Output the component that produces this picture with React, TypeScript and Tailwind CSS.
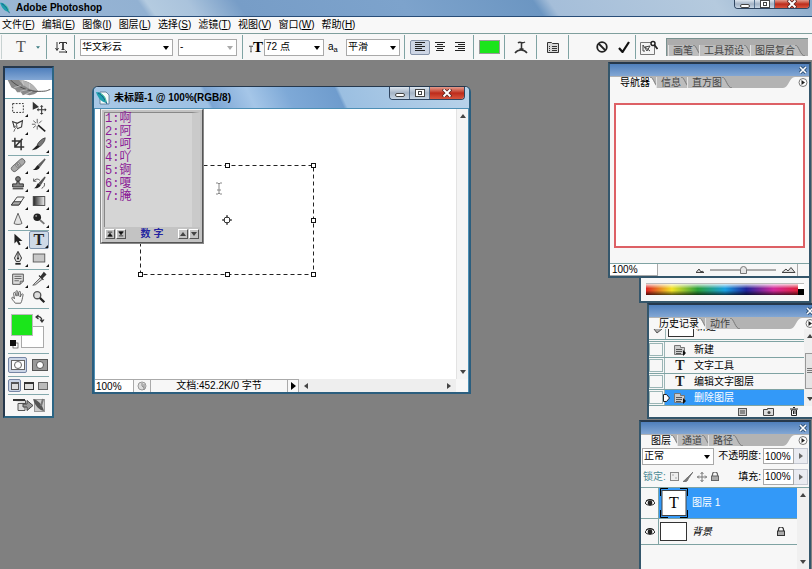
import { useState } from "react";
import type { ReactNode } from "react";
import clsx from "clsx";

const menus = [
    { label: "文件", hotkey: "F" },
    { label: "编辑", hotkey: "E" },
    { label: "图像", hotkey: "I" },
    { label: "图层", hotkey: "L" },
    { label: "选择", hotkey: "S" },
    { label: "滤镜", hotkey: "T" },
    { label: "视图", hotkey: "V" },
    { label: "窗口", hotkey: "W" },
    { label: "帮助", hotkey: "H" },
];

const candidates = ["啊", "阿", "呵", "吖", "锕", "嗄", "腌"];

const historySteps = [
    { label: "新建", icon: "doc" },
    { label: "文字工具", icon: "type" },
    { label: "编辑文字图层", icon: "type" },
    { label: "删除图层", icon: "doc" },
];

// All tool drawings use an 18x18 box
const toolIcons: Record<string, ReactNode> = {
    marquee: <rect x="3" y="4" width="12" height="10" fill="none" stroke="#222" strokeDasharray="2 1.5" />,
    move: (
        <>
            <path d="M2 2 L2 11 L9 8 Z" fill="#333" />
            <path d="M12 7v8M8 11h8" stroke="#333" strokeWidth="1.2" />
            <path d="M12 5.5l2 2h-4zM12 16.5l2-2h-4zM6.5 11l2-2v4zM17.5 11l-2-2v4z" fill="#333" />
        </>
    ),
    lasso: (
        <>
            <path d="M5 11 L3 4 L8 6 L14 3 L13 10 L8 12" fill="none" stroke="#333" strokeWidth="1.2" />
            <path d="M7 5l1 6M4 9.5c3-1 4 1 2 2.500s0 3-2 3" fill="none" stroke="#555" strokeWidth="1.1" />
        </>
    ),
    wand: (
        <>
            <path d="M8 8l8 7" stroke="#222" strokeWidth="1.8" />
            <path d="M7 1v5M7 9v4M1 7h4M9 6l3-3M2.500 3l3 2.500M2.500 11l3-2.500" stroke="#555" />
        </>
    ),
    crop: <path d="M5.500 2v10.500H16M2 5.500h10.500V16M5.500 12.500L14 3" fill="none" stroke="#333" strokeWidth="1.700" />,
    slice: (
        <>
            <path d="M16 2c-4 1-8 5-9 8l3 2c3-3 6-6 6-10z" fill="#777" stroke="#333" strokeWidth=".8" />
            <path d="M1 16l6-6 3 2-4 3z" fill="#222" />
        </>
    ),
    heal: (
        <g transform="rotate(-42 9 9)">
            <rect x="0" y="6" width="18" height="6.500" rx="3" fill="#a9a9a9" stroke="#666" />
            <rect x="6" y="6" width="6" height="6.500" fill="#888" />
            <path d="M7.500 8h1M10 8h1M7.500 10h1M10 10h1" stroke="#eee" />
        </g>
    ),
    brush: (
        <>
            <path d="M15.500 2L8 9l2 2 6-8z" fill="#666" stroke="#333" strokeWidth=".6" />
            <path d="M7.500 9l2.500 2.500C8 15 5 15 2 14.500 5 13.500 5 11 7.500 9z" fill="#222" />
        </>
    ),
    stamp: (
        <>
            <circle cx="9" cy="4.500" r="2.700" fill="#777" stroke="#333" />
            <path d="M8 7h2l.5 3H15v3.500H3V10h4.500z" fill="#888" stroke="#222" />
            <path d="M3 15.500h12" stroke="#222" strokeWidth="1.200" />
        </>
    ),
    historyBrush: (
        <>
            <path d="M15.500 2L9 9l2 2 5-8z" fill="#555" stroke="#333" strokeWidth=".6" />
            <path d="M8 9l3 2.500C9 15 6 15 3 15c3-1 3-4 5-6z" fill="#222" />
            <path d="M3 7c2-3 5-3 7-1M3 4v3h3M15 9c1 3-1 5-3 6" fill="none" stroke="#444" />
        </>
    ),
    eraser: (
        <>
            <path d="M1.500 13.500L8 4.500h8l-6 9z" fill="#f4f4f4" stroke="#333" />
            <path d="M1.500 13.500h8.500l2.500-3.700H4.300z" fill="#aaa" stroke="#333" />
        </>
    ),
    gradient: (
        <>
            <defs>
                <linearGradient id="toolGradient">
                    <stop offset="0" stopColor="#222" />
                    <stop offset="1" stopColor="#f2f2f2" />
                </linearGradient>
            </defs>
            <rect x="2.500" y="4" width="13" height="10" fill="url(#toolGradient)" stroke="#444" />
        </>
    ),
    blur: <path d="M9 2.500L4.500 14c1.500 1.500 7.500 1.500 9 0z" fill="#e2e2e2" stroke="#555" />,
    burn: (
        <>
            <circle cx="7" cy="7" r="4.300" fill="#222" />
            <path d="M10 10l5 4.500" stroke="#777" strokeWidth="2.200" />
            <circle cx="5.800" cy="5.500" r="1.100" fill="#999" />
        </>
    ),
    pathSelect: <path d="M5 2v11l2.500-2.500L10 15l2-1-2-4h4z" fill="#222" />,
    pen: (
        <>
            <path d="M9 1.500L5 9l2 4h4l2-4z" fill="#ddd" stroke="#222" />
            <path d="M9 3v6" stroke="#222" />
            <circle cx="9" cy="9.500" r="1.200" fill="#222" />
            <path d="M6 15.500h6" stroke="#222" strokeWidth="2" />
        </>
    ),
    shape: <rect x="2.500" y="4.500" width="13" height="9" fill="#c8c8c8" stroke="#555" />,
    notes: (
        <>
            <path d="M3 3.500h12v8l-3.500 3.500H3z" fill="#ddd" stroke="#444" />
            <path d="M5 6h8M5 8.500h8M5 11h5M11.500 15v-3.500H15" fill="none" stroke="#555" />
        </>
    ),
    eyedropper: (
        <>
            <path d="M11 7L3 15l-1 1 3-.5L13 9z" fill="#ccc" stroke="#555" />
            <path d="M9 5l5 5M11.500 6l3-4 2 2-3.500 3.500z" fill="#333" stroke="#333" strokeWidth="1.400" />
        </>
    ),
    hand: (
        <path
            d="M6 16c-2-3-4-4-4-6 0-1 2-1 3 1L4 5c0-1.500 1.700-1.500 2 0l1 3-.3-5c0-1.500 2-1.500 2 0L9 8l1-4.500c.3-1.300 2-1 1.800.3L11.300 9l1.700-3c.7-1.200 2-.5 1.700.7C14 10 13.500 14 12 16z"
            fill="#f7f7f7"
            stroke="#555"
        />
    ),
    zoom: (
        <>
            <circle cx="7" cy="7" r="4" fill="#ddd" stroke="#555" strokeWidth="1.500" />
            <path d="M10 10l5 5" stroke="#222" strokeWidth="2.500" />
        </>
    ),
};

const toolGroups: { name: string; label: string; flyout?: boolean }[][] = [
    [
        { name: "marquee", label: "Marquee", flyout: true },
        { name: "move", label: "Move" },
        { name: "lasso", label: "Lasso", flyout: true },
        { name: "wand", label: "Magic Wand" },
        { name: "crop", label: "Crop" },
        { name: "slice", label: "Slice", flyout: true },
    ],
    [
        { name: "heal", label: "Healing Brush", flyout: true },
        { name: "brush", label: "Brush", flyout: true },
        { name: "stamp", label: "Clone Stamp", flyout: true },
        { name: "historyBrush", label: "History Brush", flyout: true },
        { name: "eraser", label: "Eraser", flyout: true },
        { name: "gradient", label: "Gradient", flyout: true },
        { name: "blur", label: "Blur", flyout: true },
        { name: "burn", label: "Burn", flyout: true },
    ],
    [
        { name: "pathSelect", label: "Path Selection", flyout: true },
        { name: "type", label: "Type", flyout: true },
        { name: "pen", label: "Pen", flyout: true },
        { name: "shape", label: "Shape", flyout: true },
    ],
    [
        { name: "notes", label: "Notes", flyout: true },
        { name: "eyedropper", label: "Eyedropper", flyout: true },
        { name: "hand", label: "Hand" },
        { name: "zoom", label: "Zoom" },
    ],
];

const FeatherLogo = ({ className, page }: { className?: string; page?: boolean }) => (
    <svg viewBox="0 0 14 14" className={className}>
        {page && <path d="M4 1h6l3 3v9H4z" fill="#f4fafc" stroke="#52728c" strokeWidth=".8" />}
        <path d="M0 1c5 0 9 3 11 11C5 11 2 7 0 1z" fill="#1e9fae" />
        <path d="M2 2c4 2 6 5 9 11" fill="none" stroke="#135a8d" />
        <path d="M5 3c3 1 5 4 5 8" fill="none" stroke="#5cc79a" />
    </svg>
);

const WindowButtons = ({ className, height }: { className?: string; height: string }) => (
    <div className={clsx("flex overflow-hidden rounded-b border border-t-0 border-[#2f4560]", height, className)}>
        <button aria-label="Minimize" className="flex w-5 items-center justify-center border-r border-[#54708f] bg-gradient-to-b from-[#dde6ef] via-[#a5b4c6] to-[#c8d6e5]">
            <span className="mt-1 h-1 w-2.5 rounded-xs border border-[#444] bg-white"></span>
        </button>
        <button aria-label="Maximize" className="flex w-5 items-center justify-center border-r border-[#54708f] bg-gradient-to-b from-[#dde6ef] via-[#a5b4c6] to-[#c8d6e5]">
            <span className="flex h-2 w-2.5 items-center justify-center border border-[#444] bg-white">
                <span className="h-1 w-1 border border-[#444]"></span>
            </span>
        </button>
        <button aria-label="Close" className="flex w-[34px] items-center justify-center bg-gradient-to-b from-[#e29a8c] via-[#bd2a1a] to-[#d8553e]">
            <svg viewBox="0 0 10 8" className="h-2 w-2.5">
                <path d="M1 0l8 8M9 0L1 8" stroke="#5b2320" strokeWidth="3.500" />
                <path d="M1.500.5l7 7M8.500.5l-7 7" stroke="#fff" strokeWidth="2" />
            </svg>
        </button>
    </div>
);

const Select = ({ label, options, className, muted }: { label: string; options: string[]; className?: string; muted?: boolean }) => (
    <div className={clsx("relative", className)}>
        <select aria-label={label} className="block h-[17px] w-full appearance-none border border-[#a9a9a9] bg-white pl-px leading-none outline-none">
            {options.map((option) => (
                <option key={option}>{option}</option>
            ))}
        </select>
        <svg viewBox="0 0 6 4" className={clsx("pointer-events-none absolute top-[7px] right-1 h-1 w-1.5", muted ? "text-[#aaa]" : "text-black")}>
            <path d="M0 0h6L3 4z" fill="currentColor" />
        </svg>
    </div>
);

const Divider = () => <div className="h-6 w-px shrink-0 bg-[#7fa3a3]"></div>;

const AlignIcon = ({ d }: { d: string }) => (
    <svg viewBox="0 0 12 12" className="h-3 w-3">
        <path d={d} stroke="#222" />
    </svg>
);

const OptionsBar = () => (
    <div className="flex h-[27px] items-center border-t border-[#7f9f9d] bg-[#f7f7f7] pr-1">
        <div className="ml-px h-6 w-px bg-[#c8d2d2]"></div>
        <button aria-label="Type tool preset" className="flex w-11 items-center justify-center gap-2.5 pl-2">
            <span className="font-['Liberation_Serif',serif] text-[16px] text-[#555]">T</span>
            <svg viewBox="0 0 6 4" className="h-[3px] w-1"><path d="M0 0h6L3 4z" fill="#3c7c83" /></svg>
        </button>
        <Divider />
        <button aria-label="Toggle text orientation" className="flex w-[27px] justify-center">
            <svg viewBox="0 0 12 12" className="h-3 w-3">
                <path d="M2 1v8M.5 7L2 9.500 3.500 7M4.500 3V1.500h7V3M6.500 8.500h3M4 11h8M10.500 9.500L12 11l-1.500 1" fill="none" stroke="#333" />
                <path d="M8 1.500v7" stroke="#333" strokeWidth="1.700" />
            </svg>
        </button>
        <Divider />
        <Select label="Font" options={["华文彩云"]} className="ml-[5px] w-[93px]" />
        <Select label="Font style" options={["-"]} className="ml-[5px] w-[59px]" muted />
        <div className="ml-[5px]"><Divider /></div>
        <span className="ml-1.5 flex w-3.5 items-end justify-end">
            <svg viewBox="0 0 5 8" className="mb-[3px] h-2 w-[5px]"><path d="M0 1.500V.5h5v1M2.500.5v7M1.500 7.500h2" fill="none" stroke="#333" /></svg>
            <span className="font-['Liberation_Serif',serif] text-[15px] leading-[17px] font-bold">T</span>
        </span>
        <Select label="Font size" options={["72 点"]} className="ml-px w-[60px]" />
        <span className="mx-1 flex w-3.5 items-baseline text-[10px] leading-none">a<sub>a</sub></span>
        <Select label="Anti-aliasing" options={["平滑"]} className="w-[54px]" />
        <div className="ml-1"><Divider /></div>
        <button aria-label="Align left" className="ml-[5px] flex h-[15px] w-5 items-center justify-center rounded-xs border border-[#8592a8] bg-[#cdd5e4]">
            <AlignIcon d="M1 1.500h10M1 3.500h7M1 5.500h10M1 7.500h7M1 9.500h10" />
        </button>
        <button aria-label="Align center" className="flex w-5 justify-center">
            <AlignIcon d="M1 1.500h10M3 3.500h6M1 5.500h10M3 7.500h6M2 9.500h8" />
        </button>
        <button aria-label="Align right" className="flex w-5 justify-center">
            <AlignIcon d="M1 1.500h10M4 3.500h7M1 5.500h10M4 7.500h7M1 9.500h10" />
        </button>
        <div className="ml-[3px]"><Divider /></div>
        <button aria-label="Text color" className="ml-[5px] h-3.5 w-[21px] border border-[#9a9a9a] bg-[#1be51b]"></button>
        <div className="ml-1"><Divider /></div>
        <button aria-label="Warp text" className="flex w-[31px] justify-center">
            <svg viewBox="0 0 14 14" className="h-3.5 w-3.5">
                <path d="M4 3c2-2 4 1 7-1M7.500 2v7M5.500 9h4M1 13c3-4 9-4 12 0" fill="none" stroke="#333" strokeWidth="1.500" />
            </svg>
        </button>
        <Divider />
        <button aria-label="Palettes" className="flex w-[31px] justify-center">
            <svg viewBox="0 0 12 12" className="h-3 w-3">
                <path d="M.5 1.500h4l1 1h6v9H.5z" fill="#d8d8d8" stroke="#333" />
                <path d="M2 5.500h1M5 5.500h5M2 7.500h1M5 7.500h5M2 9.500h1M5 9.500h5" stroke="#333" />
            </svg>
        </button>
        <Divider />
        <button aria-label="Cancel" className="ml-auto flex w-[22px] justify-center">
            <svg viewBox="0 0 12 12" className="h-3 w-3">
                <circle cx="6" cy="6" r="4.800" fill="none" stroke="#222" strokeWidth="1.800" />
                <path d="M2.500 2.500l7 7" stroke="#222" strokeWidth="1.800" />
            </svg>
        </button>
        <button aria-label="Commit" className="flex w-[22px] justify-center">
            <svg viewBox="0 0 12 12" className="h-3 w-3">
                <path d="M1 7l3.500 4L11 1" fill="none" stroke="#111" strokeWidth="2.200" />
            </svg>
        </button>
        <Divider />
        <button aria-label="Go to Bridge" className="flex w-[30px] pl-1">
            <svg viewBox="0 0 18 15" className="h-[15px] w-[18px]">
                <path d="M.5 2.500h11l3 3v9H.5z" fill="#f4f4f4" stroke="#777" />
                <path d="M3 5l4 6 3-5-5 1 5 4M3 5v6h2" fill="none" stroke="#444" />
                <circle cx="13" cy="3.500" r="2" fill="#fff" stroke="#222" strokeWidth="1.500" />
                <path d="M14.500 5l3 4" stroke="#222" strokeWidth="1.800" />
            </svg>
        </button>
        <div className="flex h-[18px] w-[142px] items-end border-t border-l border-[#78918f] bg-[#adadad] pl-px">
            {["画笔", "工具预设", "图层复合"].map((tab) => (
                <PanelTab key={tab} label={tab} />
            ))}
        </div>
    </div>
);

const PanelTab = ({ label, active }: { label: string; active?: boolean }) => (
    <button className={clsx("flex h-[11px] items-center text-[10px] leading-none whitespace-nowrap", active ? "text-black" : "text-[#444]")}>
        <span className={clsx("h-full pl-1 leading-[11px]", active ? "bg-[#f7f7f7]" : "border-l border-[#e2e2e2] bg-[#bdbdbd]")}>{label}</span>
        <svg viewBox="0 0 10 11" preserveAspectRatio="none" className={clsx("-mr-1 h-full w-2.5", active ? "text-[#f7f7f7]" : "text-[#bdbdbd]")}>
            <path d="M0 0c4 0 5 11 10 11H0z" fill="currentColor" />
            <path d="M0 0c4 0 5 11 10 11" fill="none" stroke="#777" />
        </svg>
    </button>
);

const PanelShell = ({ tabs, className, children }: { tabs: string[]; className?: string; children: ReactNode }) => (
    <section className={clsx("absolute flex flex-col border-2 border-[#34566b] border-t-[#26384c] bg-[#f7f7f7]", className)}>
        <div className="flex h-3 shrink-0 items-center justify-end bg-gradient-to-b from-[#4f7fbc] to-[#83a7d4] pr-0.5">
            <button aria-label="Close panel">
                <svg viewBox="0 0 8 8" className="h-2 w-2">
                    <path d="M1 1l6 6M7 1L1 7" stroke="#36597f" strokeWidth="3.500" />
                    <path d="M1 1l6 6M7 1L1 7" stroke="#fff" strokeWidth="1.500" />
                </svg>
            </button>
        </div>
        <div className="flex h-3 shrink-0 items-end bg-[#b3b3b3]">
            <div className="h-[11px] w-1.5 bg-[#f7f7f7]"></div>
            {tabs.map((tab, index) => (
                <PanelTab key={tab} label={tab} active={index === 0} />
            ))}
            <button aria-label="Panel menu" className="ml-auto flex h-[11px]">
                <svg viewBox="0 0 26 11" className="h-full w-[26px]">
                    <path d="M0 11C6 11 6 0 12 0h14v11z" fill="#f7f7f7" />
                    <circle cx="20" cy="5.500" r="4" fill="#fff" stroke="#777" />
                    <path d="M18.500 3l3.500 2.500L18.500 8z" fill="#222" />
                </svg>
            </button>
        </div>
        {children}
    </section>
);

const Toolbox = () => {
    const [activeTool, setActiveTool] = useState("type");

    return (
        <aside className="absolute top-1.5 left-[3px] flex w-[51px] flex-col border-2 border-[#2c6584] border-t-[#26384c] border-l-[#26384c] bg-[#f7f7f7]">
            <div className="h-3 bg-gradient-to-b from-[#4f7fbc] to-[#83a7d4]"></div>
            <svg viewBox="0 0 46 19" className="h-[19px] w-full border-b border-[#66a3ad] bg-white">
                <path d="M1 0h14c8 1 14 5 18 12-2 3-6 4-9 4l-4-1-3 1-2-3-4 0-2-3-4-2z" fill="#8a8a8a" />
                <path d="M13 0c9 1 16 5 20 12-8-1-15-5-20-12z" fill="#b5b5b5" />
                <path d="M4 0c7 7 18 12 29 12s9-1 13-2" fill="none" stroke="#4a4a4a" />
                <path d="M8 8l7-2M14 12l8-2M20 15l7-3M16 0l2 6M24 4l0 5" stroke="#d5d5d5" strokeWidth=".7" />
            </svg>
            <div className="flex flex-col px-[3px]">
                {toolGroups.map((group, index) => (
                    <div key={index} className="grid grid-cols-2 justify-items-center border-b border-[#84a9ad] pb-0.5">
                        {group.map((tool) => (
                            <button
                                key={tool.name}
                                aria-label={tool.label}
                                onClick={() => setActiveTool(tool.name)}
                                className={clsx(
                                    "relative flex h-[18px] w-5 items-center justify-center",
                                    activeTool === tool.name && "rounded-xs border border-[#7e93ac] bg-[#cfdae7]"
                                )}
                            >
                                {tool.name === "type" ? (
                                    <span className="font-['Liberation_Serif',serif] text-[16px] font-bold leading-none text-[#222]">T</span>
                                ) : (
                                    <svg viewBox="0 0 18 18" className="h-4 w-4">{toolIcons[tool.name]}</svg>
                                )}
                                {tool.flyout && (
                                    <svg viewBox="0 0 3 3" className="absolute right-0 bottom-0 h-[3px] w-[3px]"><path d="M3 0v3H0z" fill="#111" /></svg>
                                )}
                            </button>
                        ))}
                    </div>
                ))}
                <div className="border-b border-[#84a9ad] pt-1 pb-[3px] pl-0.5">
                    <svg viewBox="0 0 36 37" className="h-[37px] w-9">
                        <rect x="11.500" y="13.500" width="22" height="21" fill="#fff" stroke="#aaa" />
                        <rect x="1.500" y="1.500" width="21" height="21" fill="#1be51b" stroke="#bbb" />
                        <path d="M27 4c3-1 5 1 5 4M28.500 2L26 4l2.500 2M30 6.500l2 2.500 2-2.500" fill="none" stroke="#333" strokeWidth="1.200" />
                        <rect x="3" y="30" width="5" height="5" fill="#fff" stroke="#333" strokeWidth=".6" />
                        <rect x="0" y="27" width="6" height="6" fill="#111" />
                    </svg>
                </div>
                <div className="flex justify-between border-b border-[#84a9ad] py-[3px]">
                    <button aria-label="Standard mode" className="flex h-4 w-[19px] items-center justify-center rounded-xs border border-[#7686a5] bg-[#cbd5e6]">
                        <span className="flex h-2.5 w-3.5 items-center justify-center border border-[#666] bg-white"><span className="size-2 rounded-full border border-[#666]"></span></span>
                    </button>
                    <button aria-label="Quick mask mode" className="flex h-4 w-[19px] items-center justify-center">
                        <span className="flex h-3 w-4 items-center justify-center border border-[#555] bg-[#999]"><span className="size-2 rounded-full border border-[#555] bg-white"></span></span>
                    </button>
                </div>
                <div className="flex justify-between border-b border-[#84a9ad] py-0.5">
                    <button aria-label="Standard screen" className="flex h-[13px] w-[13px] items-center justify-center rounded-xs border border-[#7686a5] bg-[#cbd5e6]"><span className="h-2 w-2 border border-t-2 border-[#555] bg-[#ddd]"></span></button>
                    <button aria-label="Full screen with menu" className="flex h-[13px] w-[13px] items-center justify-center"><span className="h-2 w-2.5 border border-t-2 border-[#333] bg-[#ddd]"></span></button>
                    <button aria-label="Full screen" className="flex h-[13px] w-[13px] items-center justify-center"><span className="h-2 w-2.5 border border-[#666] bg-[#bbb]"></span></button>
                </div>
                <button aria-label="Edit in ImageReady" className="flex justify-center py-0.5 pb-[3px]">
                    <svg viewBox="0 0 36 16" className="h-4 w-9">
                        <path d="M2.500 3.500h12v4M7 6.500h7v7H7z" fill="#ddd" stroke="#555" />
                        <path d="M2 3h12" stroke="#333" strokeWidth="2" />
                        <path d="M12 7h4V3.500l6 5-6 5V10h-4z" fill="#999" stroke="#444" />
                        <rect x="23.500" y="2.500" width="10" height="12" fill="#ccc" stroke="#999" />
                        <path d="M22 2c5 1 9 5 11 12-5-1-9-5-11-12z" fill="#555" />
                        <path d="M32 2l-2 7" stroke="#777" strokeWidth="2" />
                    </svg>
                </button>
            </div>
        </aside>
    );
};

const ScrollArrow = ({ direction }: { direction: "up" | "down" | "left" | "right" }) => {
    const paths = { up: "M0 5L3 1l3 4z", down: "M0 1h6L3 5z", left: "M5 0v6L1 3z", right: "M1 0v6l4-3z" };
    return (
        <svg viewBox="0 0 6 6" className="h-1.5 w-1.5 shrink-0"><path d={paths[direction]} fill="#444" /></svg>
    );
};

const InputMethodWindow = () => (
    <div className="absolute top-0 left-1.5 flex w-[102px] flex-col border border-[#eee] border-r-[#555] border-b-[#555] bg-[#c3c3c3] p-0.5 outline outline-[#888]">
        <ol className="h-[115px] border-t border-l border-[#888] border-r-8 border-r-[#cacaca] bg-[#d5d5d5]">
            {candidates.map((word, index) => (
                <li key={word} className="h-[13px] font-['Liberation_Mono','Noto_Sans_CJK_SC',monospace] text-[12px] leading-[13px] text-[#8b1b95]">
                    {index + 1}:{word}
                </li>
            ))}
        </ol>
        <div className="flex h-[13px] items-center gap-px px-px">
            {["M1 1.500h6M1 7L4 3l3 4z", "M1 1h6L4 5zM1 6.500h6"].map((d) => (
                <button key={d} aria-label="Page" className="flex h-2.5 w-2.5 items-center justify-center border border-white border-r-[#555] border-b-[#555]">
                    <svg viewBox="0 0 8 8" className="h-1.5 w-1.5"><path d={d} fill="#111" stroke="#111" /></svg>
                </button>
            ))}
            <span className="flex-1 text-center text-[10px] leading-none font-bold text-[#2525a0]">数 字</span>
            {["up", "down"].map((direction) => (
                <button key={direction} aria-label={direction} className="flex h-2.5 w-2.5 items-center justify-center border border-white border-r-[#555] border-b-[#555]">
                    <ScrollArrow direction={direction as "up" | "down"} />
                </button>
            ))}
        </div>
    </div>
);

const handles = [[45, 56], [132, 56], [218, 56], [45, 165], [132, 165], [218, 165], [218, 111], [45, 111]];

const DocumentWindow = () => (
    <section className="absolute top-[26px] left-[92px] flex w-[379px] flex-col rounded-t-md border-2 border-t border-[#2b5e7e] border-t-[#26384c] bg-[#f7f7f7]">
        <header className="relative flex h-[21px] items-center gap-1 rounded-t bg-[linear-gradient(65deg,#a8c8e6_0%,#9dc0e3_30%,#7ba5d4_31%,#a5c6e8_42%,#7ea9d7_52%,#6f9ccd_65%,#9bbfe1_66%,#b9d3ea_100%)] pl-0.5">
            <FeatherLogo className="h-3.5 w-3.5" page />
            <h2 className="text-[10px] font-bold text-black">未标题-1 @ 100%(RGB/8)</h2>
            <WindowButtons className="absolute top-0 right-1" height="h-[13px]" />
        </header>
        <div className="flex h-[271px] border-x border-t border-[#4d8fb5]">
            <div className="relative flex-1 overflow-hidden bg-white">
                <svg viewBox="0 0 361 270" className="h-[270px] w-[361px]">
                    <rect x="45.500" y="56.500" width="173" height="109" fill="none" stroke="#222" strokeDasharray="4 3" />
                    {handles.map(([x, y]) => (
                        <rect key={`${x}-${y}`} x={x - 2 + 0.5} y={y - 2 + 0.5} width="4" height="4" fill="#fff" stroke="#111" />
                    ))}
                    <circle cx="132" cy="111" r="3" fill="#fff" stroke="#333" />
                    <path d="M132 106v3M132 113v3M127 111h3M134 111h3" stroke="#111" />
                    <path d="M121 74h2l1 1 1-1h2M124 75v9M122 81h4M121 85h2l1-1 1 1h2" fill="none" stroke="#888" />
                </svg>
                <InputMethodWindow />
            </div>
            <div className="flex w-3 flex-col items-center justify-between border-l border-[#e3e3e3] bg-[#f4f4f4] py-1">
                <ScrollArrow direction="up" />
                <ScrollArrow direction="down" />
            </div>
        </div>
        <footer className="flex h-[13px] items-center border-x border-[#4d8fb5] text-[10px] leading-none text-black">
            <input aria-label="Zoom level" defaultValue="100%" className="h-full w-[38px] border-t border-[#aaa] bg-white pl-px" />
            <div className="flex h-full w-[18px] items-center justify-center border-x border-t border-[#aaa]">
                <svg viewBox="0 0 10 10" className="h-2.5 w-2.5">
                    <circle cx="5" cy="5" r="4" fill="#ddd" stroke="#999" />
                    <path d="M5 2v3l2 1.500M7 3v6" fill="none" stroke="#888" />
                </svg>
            </div>
            <div className="flex h-full w-[136px] items-center justify-center border-t border-[#aaa]">文档:452.2K/0 字节</div>
            <button aria-label="Status options" className="flex h-full w-3 items-center justify-center border border-b-0 border-[#aaa]">
                <svg viewBox="0 0 5 8" className="h-2 w-[5px]"><path d="M0 0v8l5-4z" fill="#000" /></svg>
            </button>
            <div className="flex h-full flex-1 items-center justify-between bg-[#eee] px-1">
                <ScrollArrow direction="left" />
                <ScrollArrow direction="right" />
            </div>
            <div className="h-full w-3"></div>
        </footer>
    </section>
);

const NavigatorPanel = () => (
    <PanelShell tabs={["导航器", "信息", "直方图"]} className="top-0.5 right-px w-[203px]">
        <div className="px-1 pt-[15px] pb-[15px]">
            <div className="h-[145px] border-2 border-[#dd6065] bg-white"></div>
        </div>
        <div className="flex h-[13px] items-center border-t border-[#7fa3a3] text-[10px]">
            <input aria-label="Navigator zoom" defaultValue="100%" className="h-3 w-12 border-r border-b border-[#aaa] bg-white pl-0.5 leading-none" />
            <svg viewBox="0 0 8 5" className="ml-[38px] h-[5px] w-2"><path d="M0 4.500L3 1l2 3 1-1 2 1.500z" fill="#ddd" stroke="#444" /></svg>
            <input
                type="range"
                aria-label="Zoom slider"
                defaultValue={50}
                className="mx-1.5 h-2 w-[66px] appearance-none bg-transparent [&::-webkit-slider-runnable-track]:h-0.5 [&::-webkit-slider-runnable-track]:bg-[#aaa] [&::-webkit-slider-thumb]:-mt-[3px] [&::-webkit-slider-thumb]:h-2 [&::-webkit-slider-thumb]:w-[7px] [&::-webkit-slider-thumb]:appearance-none [&::-webkit-slider-thumb]:rounded-t [&::-webkit-slider-thumb]:border [&::-webkit-slider-thumb]:border-[#777] [&::-webkit-slider-thumb]:bg-[#e5e5e5]"
            />
            <svg viewBox="0 0 14 6" className="h-1.5 w-3.5"><path d="M0 5.500L4 2l2 2 3-3.500 4 5z" fill="#ddd" stroke="#444" /></svg>
            <div className="ml-auto h-full w-3 border-l border-[#aaa]"></div>
        </div>
    </PanelShell>
);

const ColorPanel = () => (
    <section className="absolute top-[216px] right-px w-[172px] border-2 border-t-0 border-[#34566b] bg-[#f7f7f7] px-[5px] pt-[7px] pb-1.5">
        <div className="flex h-3 border-t border-[#bbb]">
            <div className="flex-1 bg-[linear-gradient(to_bottom,rgba(255,255,255,.8),transparent_40%,transparent_60%,rgba(0,0,0,.65)),linear-gradient(to_right,#d22_0%,#f3e326_17%,#2c9f3a_34%,#1a9fe0_52%,#20249a_66%,#d32a9a_84%,#e0213a_100%)]"></div>
            <div className="w-1.5 bg-gradient-to-b from-white from-50% to-black to-50%"></div>
        </div>
    </section>
);

const HistoryIcon = ({ name }: { name: string }) =>
    name === "type" ? (
        <span className="w-3 text-center font-['Liberation_Serif',serif] text-[14px] font-bold leading-none text-[#222]">T</span>
    ) : (
        <svg viewBox="0 0 12 12" className="h-3 w-3">
            <path d="M.5 1.500h6v2h4v7H.5z" fill="#ccc" stroke="#777" />
            <path d="M2 5.500h6M2 7.500h6M2 9.500h5" stroke="#555" />
            <path d="M9 6v6l3-3z" fill="#111" />
        </svg>
    );

const HistoryPanel = () => {
    const [current, setCurrent] = useState(3);

    return (
        <PanelShell tabs={["历史记录", "动作"]} className="top-[243px] -right-1.5 w-[171px]">
            <div className="flex">
                <div className="flex-1">
                    <div className="flex h-[11px] overflow-hidden border-b border-[#7fa3a3]">
                        <div className="w-[17px] border-r border-[#9ab5b5] pl-1"><svg viewBox="0 0 10 5" className="h-[5px] w-2.5"><path d="M1 0l3 4 5-4" fill="#aaa" stroke="#555" /></svg></div>
                        <div className="ml-0.5 h-2 w-[26px] border border-t-0 border-[#333] bg-white"></div>
                        <span className="-mt-2 ml-0.5 text-[10px] leading-[12px]">新建</span>
                    </div>
                    <ul className="mt-px border-t border-[#7fa3a3]">
                        {historySteps.map((step, index) => (
                            <li key={index} className="flex h-4 border-b border-[#7fa3a3]">
                                <span className="my-px w-3.5 border border-[#9ab5b5] bg-[#f7f7f7]"></span>
                                <button
                                    onClick={() => setCurrent(index)}
                                    className={clsx(
                                        "relative ml-px flex flex-1 items-center gap-2 border-l border-[#9ab5b5] pl-[9px] text-[10px] leading-none",
                                        current === index ? "bg-[#3399f8] text-white" : "text-black"
                                    )}
                                >
                                    {current === index && (
                                        <svg viewBox="0 0 7 8" className="absolute top-1 -left-0.5 h-2 w-[7px]"><path d="M.5.5h3l3 3.500-3 3.500h-3z" fill="#fff" stroke="#222" /></svg>
                                    )}
                                    <HistoryIcon name={step.icon} />
                                    <span>{step.label}</span>
                                </button>
                            </li>
                        ))}
                    </ul>
                </div>
                <div className="flex w-3 flex-col items-center justify-between bg-[#f0f0f0] py-1">
                    <ScrollArrow direction="up" />
                    <div className="mt-1.5 flex h-9 w-2.5 flex-col items-center justify-center gap-px border border-[#999] bg-[#e4e4e4]">
                        <span className="h-px w-1.5 bg-[#777]"></span>
                        <span className="h-px w-1.5 bg-[#777]"></span>
                        <span className="h-px w-1.5 bg-[#777]"></span>
                    </div>
                    <ScrollArrow direction="down" />
                </div>
            </div>
            <div className="flex h-[11px] items-center justify-end gap-4 pr-[18px]">
                <button aria-label="New document from state"><svg viewBox="0 0 9 8" className="h-2 w-[9px]"><rect x=".5" y=".5" width="8" height="7" fill="#ccc" stroke="#555" /><path d="M2 3h5M2 5h5" stroke="#444" /></svg></button>
                <button aria-label="New snapshot"><svg viewBox="0 0 11 8" className="h-2 w-[11px]"><path d="M.5 1.500h4v-1h6v7H.5z" fill="#ddd" stroke="#444" /><circle cx="6" cy="4.500" r="1.500" fill="#444" /></svg></button>
                <button aria-label="Delete state"><svg viewBox="0 0 8 9" className="h-[9px] w-2"><path d="M1.500 3h5v5.500h-5zM0 2h8M3 .5h2M3.500 4v3M5 4v3" fill="none" stroke="#222" /></svg></button>
            </div>
        </PanelShell>
    );
};

const EyeIcon = () => (
    <svg viewBox="0 0 10 8" className="h-2 w-2.5">
        <path d="M0 4c2-4 8-4 10 0-2 3-8 3-10 0z" fill="#fff" stroke="#222" />
        <circle cx="5" cy="4" r="2.400" fill="#222" />
        <path d="M1 2c2-2 6-2 8 0" fill="none" stroke="#222" />
    </svg>
);

const LockIcon = ({ color }: { color: string }) => (
    <svg viewBox="0 0 8 9" className="h-[9px] w-2">
        <path d="M1.500 4V2.500a2.500 2.500 0 015 0V4" fill="none" stroke={color} strokeWidth="1.200" />
        <rect x=".5" y="4" width="7" height="4.500" fill="#aaa" stroke={color} />
    </svg>
);

const PercentField = ({ label }: { label: string }) => (
    <label className="ml-auto flex items-center">
        <span className="pr-0.5">{label}:</span>
        <input defaultValue="100%" className="h-4 w-[31px] border border-[#a9a9a9] bg-white pl-px" />
        <span className="flex h-4 w-3.5 items-center justify-center border border-l-0 border-[#b7bcc8] bg-[#e6e9f0] opacity-80"><ScrollArrow direction="right" /></span>
    </label>
);

const LayersPanel = () => (
    <PanelShell tabs={["图层", "通道", "路径"]} className="top-[360px] right-px -bottom-1 w-[172px]">
        <div className="flex flex-1 flex-col text-[10px] leading-none">
            <div className="flex h-5 items-center pr-px pl-px">
                <Select label="Blend mode" options={["正常"]} className="w-[72px]" />
                <PercentField label="不透明度" />
            </div>
            <div className="flex h-[22px] items-center border-b border-[#7fa3a3] pr-px pl-0.5">
                <span className="text-[#4a8994]">锁定:</span>
                <span className="ml-1 flex items-center gap-1">
                    <button aria-label="Lock transparency"><svg viewBox="0 0 9 9" className="h-[9px] w-[9px]"><rect x=".5" y=".5" width="8" height="8" fill="#eee" stroke="#888" /><path d="M2 2h2v2H2zM5 5h2v2H5z" fill="#ccc" /></svg></button>
                    <button aria-label="Lock pixels"><svg viewBox="0 0 10 10" className="h-2.5 w-2.5"><path d="M10 0L4 6l1 1zM4 6C2 7 2 9 0 9.500 3 10 5 9 5 7z" fill="#777" stroke="#777" /></svg></button>
                    <button aria-label="Lock position"><svg viewBox="0 0 10 10" className="h-2.5 w-2.5"><path d="M5 0v10M0 5h10M3.500 2L5 .5 6.500 2M3.500 8L5 9.500 6.500 8M2 3.500L.5 5 2 6.500M8 3.500L9.500 5 8 6.500" fill="none" stroke="#777" /></svg></button>
                    <button aria-label="Lock all"><LockIcon color="#666" /></button>
                </span>
                <PercentField label="填充" />
            </div>
            <div className="flex flex-1">
                <ul className="flex-1">
                    <li className="flex h-[31px] items-stretch border-b border-[#7fa3a3] bg-[#3399f8] text-white">
                        <button aria-label="Toggle visibility" className="flex w-[18px] items-center justify-center border-r border-[#7fa3a3] bg-[#f7f7f7]"><EyeIcon /></button>
                        <span className="relative ml-px flex w-7 items-center justify-center font-['Liberation_Serif',serif] text-[16px] text-black">
                            <svg viewBox="0 0 28 30" className="absolute inset-0 h-[30px] w-7">
                                <rect x="2" y="2.500" width="24" height="25" fill="#fff" stroke="#444" />
                                <path d="M.5 8V.5H8M20 .5h7.500V8M27.500 22v7.500H20M8 29.500H.5V22" fill="none" stroke="#000" />
                            </svg>
                            <span className="relative">T</span>
                        </span>
                        <span className="self-center pl-1">图层 1</span>
                    </li>
                    <li className="flex h-[26px] items-stretch border-b border-[#7fa3a3] text-black">
                        <button aria-label="Toggle visibility" className="flex w-[18px] items-center justify-center border-r border-[#7fa3a3]"><EyeIcon /></button>
                        <span className="mx-px my-[3px] w-[27px] border border-[#333] bg-white"></span>
                        <span className="self-center pl-1 italic">背景</span>
                        <span className="mr-3 ml-auto self-center"><LockIcon color="#333" /></span>
                    </li>
                </ul>
                <div className="flex w-3 flex-col items-center justify-between bg-[#f0f0f0] pt-1 pb-1.5">
                    <ScrollArrow direction="up" />
                    <ScrollArrow direction="down" />
                </div>
            </div>
        </div>
    </PanelShell>
);

const App = () => {
    return (
        <div className="flex h-screen flex-col overflow-hidden bg-[#808080] font-['Liberation_Sans','Noto_Sans_CJK_SC',sans-serif] text-[10px] text-black">
            <header className="relative flex h-[17px] shrink-0 items-center border-b border-[#284d78] bg-[linear-gradient(55deg,#9bb7d5_0%,#92b1d2_18%,#b4cbe0_19%,#aac3dc_24%,#779dc7_30%,#7da3cc_50%,#6c96c2_66%,#a5bed9_68%,#b5cade_88%,#8baaca_100%)]">
                <FeatherLogo className="h-3.5 w-3" />
                <h1 className="pl-1 text-[10px] leading-none font-bold">Adobe Photoshop</h1>
                <WindowButtons className="absolute top-0 right-0.5" height="h-[9px]" />
            </header>
            <nav className="flex h-4 shrink-0 items-center gap-[7px] bg-[#f8f8f8] pl-0.5">
                {menus.map((menu) => (
                    <button key={menu.label} className="leading-none">
                        {menu.label}(<u>{menu.hotkey}</u>)
                    </button>
                ))}
            </nav>
            <OptionsBar />
            <main className="relative flex-1 overflow-hidden">
                <Toolbox />
                <DocumentWindow />
                <HistoryPanel />
                <ColorPanel />
                <NavigatorPanel />
                <LayersPanel />
            </main>
        </div>
    );
};

export default App;
